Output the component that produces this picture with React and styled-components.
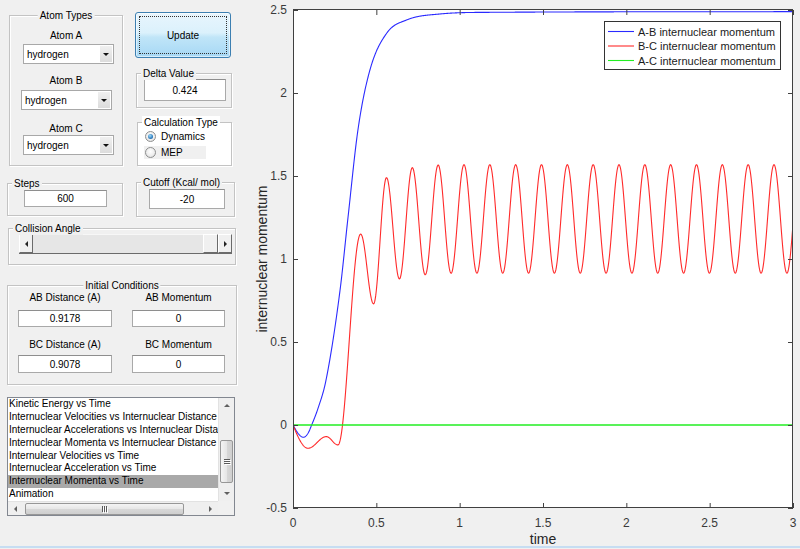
import React from 'react';
import styled, { createGlobalStyle } from 'styled-components';

const GlobalStyle = createGlobalStyle`
  html, body {
    margin: 0;
    padding: 0;
    background: #f0f0f0;
  }
  body {
    font-family: "Liberation Sans", Arial, sans-serif;
    font-size: 10px;
    color: #000;
  }
  #root {
    width: 800px;
    height: 549px;
    overflow: hidden;
  }
`;

const Window = styled.div`
  width: 800px;
  height: 549px;
  display: flex;
  flex-direction: column;
  background: #f0f0f0;
`;

const Main = styled.div`
  display: flex;
  height: 546px;
`;

const BottomEdge = styled.div`
  height: 2px;
  background: #c6ddf2;
`;

const Controls = styled.div`
  width: 240px;
  flex: none;
  display: flex;
  flex-direction: column;
`;

const Row = styled.div`
  display: flex;
  align-items: flex-start;
`;

const Column = styled.div`
  display: flex;
  flex-direction: column;
  align-items: flex-start;
  width: ${p => p.$w}px;
  margin: ${p => p.$mt || 0}px 0 0 ${p => p.$ml || 0}px;
`;

const Panel = styled.div`
  position: relative;
  box-sizing: border-box;
  flex: none;
  width: ${p => p.$w}px;
  height: ${p => p.$h}px;
  margin: ${p => p.$mt || 0}px 0 0 ${p => p.$ml || 0}px;
  border: 1px solid #c3c3c3;
  box-shadow: inset 1px 1px 0 #fff, 1px 1px 0 #fff;
  background: ${p => p.$bg || '#f0f0f0'};
  display: flex;
  flex-direction: column;
  align-items: flex-start;
`;

const PanelTitle = styled.span`
  position: absolute;
  top: -7px;
  left: ${p => (p.$center ? '50%' : '4px')};
  transform: ${p => (p.$center ? 'translateX(-50%)' : 'none')};
  padding: 0 2px;
  line-height: 13px;
  white-space: nowrap;
  background: inherit;
`;

const FieldLabel = styled.div`
  align-self: stretch;
  text-align: center;
  line-height: 12px;
  white-space: nowrap;
  margin-top: ${p => p.$mt || 0}px;
`;

const EditBox = styled.div`
  box-sizing: border-box;
  flex: none;
  width: ${p => p.$w}px;
  height: ${p => p.$h}px;
  margin: ${p => p.$mt || 0}px 0 0 ${p => p.$ml || 0}px;
  background: #fff;
  border: 1px solid #a9a9a9;
  border-top-color: #8e8e8e;
  display: flex;
  align-items: center;
  justify-content: center;
`;

const arrowCss = (dir, s, c) => {
  if (dir === 'down') return `border-width: ${s}px ${s}px 0; border-top-color: ${c};`;
  if (dir === 'up') return `border-width: 0 ${s}px ${s}px; border-bottom-color: ${c};`;
  if (dir === 'left') return `border-width: ${s}px ${s}px ${s}px 0; border-right-color: ${c};`;
  return `border-width: ${s}px 0 ${s}px ${s}px; border-left-color: ${c};`;
};

const Arrow = styled.span`
  width: 0;
  height: 0;
  border-style: solid;
  border-color: transparent;
  ${p => arrowCss(p.$dir, p.$s || 3, p.$c || '#000')}
`;

const Dropdown = styled.div`
  box-sizing: border-box;
  flex: none;
  width: 91px;
  height: 20px;
  margin: ${p => p.$mt}px 0 0 ${p => p.$ml}px;
  padding: 0 1px 0 3px;
  background: #fff;
  border: 1px solid #a8a8a8;
  display: flex;
  align-items: center;
`;

const DropValue = styled.span`
  flex: 1;
`;

const DropButton = styled.span`
  width: 12px;
  height: 16px;
  background: linear-gradient(#f0f0f0, #dcdcdc);
  display: flex;
  align-items: center;
  justify-content: center;
`;

const UpdateButton = styled.button`
  box-sizing: border-box;
  flex: none;
  width: 96px;
  height: 46px;
  margin: 0;
  padding: 3px;
  border: 1px solid #3c7fb1;
  border-radius: 3px;
  background: linear-gradient(#e8f5fd 0%, #dbf1fc 45%, #c0e5f8 55%, #a6d8f5 100%);
  box-shadow: inset 0 0 0 1px rgba(255, 255, 255, 0.55);
  font: inherit;
  color: #000;
`;

const FocusRing = styled.span`
  box-sizing: border-box;
  display: flex;
  height: 100%;
  align-items: center;
  justify-content: center;
  border: 1px dotted #333;
`;

const RadioRow = styled.div`
  box-sizing: border-box;
  display: flex;
  align-items: center;
  gap: 5px;
  width: 62px;
  height: 13px;
  margin: ${p => p.$mt}px 0 0 6px;
  padding-left: 1px;
  background: ${p => p.$bg || 'transparent'};
`;

const RadioCircle = styled.span`
  box-sizing: border-box;
  flex: none;
  width: 11px;
  height: 11px;
  border-radius: 50%;
  border: 1px solid #8e8f8f;
  background: radial-gradient(circle at 50% 40%, #fff 0%, #ececec 60%, #d4d4d4 100%);
  display: flex;
  align-items: center;
  justify-content: center;
`;

const RadioDot = styled.span`
  width: 5px;
  height: 5px;
  border-radius: 50%;
  background: radial-gradient(circle at 40% 35%, #a2dbf9, #1f6fb4 70%, #124e86);
`;

const Slider = styled.div`
  box-sizing: border-box;
  display: flex;
  width: 213px;
  height: 20px;
  margin: 5px 0 0 10px;
  background: #e6e6e6;
  border-bottom: 1px solid #6b6b6b;
`;

const SliderButton = styled.span`
  box-sizing: border-box;
  flex: none;
  width: ${p => p.$w || 14}px;
  background: #f0f0f0;
  border-style: solid;
  border-width: 1px;
  border-color: #fff #6b6b6b #6b6b6b #fff;
  display: flex;
  align-items: center;
  justify-content: center;
`;

const SliderTrack = styled.span`
  flex: 1;
  border-top: 1px solid #f7f7f7;
`;

const CondGrid = styled.div`
  display: grid;
  grid-template-columns: 94px 93px;
  column-gap: 20px;
  row-gap: 12px;
  padding: 6px 0 0 10px;
`;

const CondCell = styled.div`
  display: flex;
  flex-direction: column;
  align-items: center;
`;

const ListBox = styled.div`
  box-sizing: border-box;
  width: 228px;
  height: 119px;
  margin: 12px 0 0 7px;
  border: 1px solid #828790;
  background: #fff;
  display: grid;
  grid-template-columns: 1fr 16px;
  grid-template-rows: 1fr 14px;
`;

const ListItems = styled.div`
  overflow: hidden;
`;

const ListItem = styled.div`
  height: 12.9px;
  line-height: 12.9px;
  padding-left: 1px;
  white-space: nowrap;
  overflow: hidden;
  background: ${p => (p.$selected ? '#a9a9a9' : 'transparent')};
`;

const VScroll = styled.div`
  display: flex;
  flex-direction: column;
  align-items: center;
  background: #efefef;
  border-left: 1px solid #e2e2e2;
`;

const HScroll = styled.div`
  display: flex;
  align-items: center;
  background: #efefef;
  border-top: 1px solid #e2e2e2;
`;

const ScrollButton = styled.span`
  flex: none;
  width: 15px;
  height: ${p => (p.$vertical ? '15px' : '13px')};
  display: flex;
  align-items: center;
  justify-content: center;
`;

const TrackGap = styled.span`
  flex: ${p => (p.$size ? 'none' : '1')};
  width: ${p => (p.$size ? `${p.$size}px` : 'auto')};
  height: ${p => (p.$size && p.$vertical ? `${p.$size}px` : 'auto')};
`;

const Thumb = styled.span`
  box-sizing: border-box;
  flex: none;
  width: ${p => p.$w}px;
  height: ${p => p.$h}px;
  border: 1px solid #979797;
  border-radius: 2px;
  background: ${p => (p.$vertical
    ? 'linear-gradient(to right, #f4f4f4, #e6e6e6 50%, #d8d8d8 50%, #cfcfcf)'
    : 'linear-gradient(#f4f4f4, #e6e6e6 50%, #d8d8d8 50%, #cfcfcf)')};
  display: flex;
  flex-direction: ${p => (p.$vertical ? 'column' : 'row')};
  align-items: center;
  justify-content: center;
  gap: 1px;
`;

const Grip = styled.span`
  width: ${p => (p.$vertical ? '6px' : '1px')};
  height: ${p => (p.$vertical ? '1px' : '6px')};
  background: #5a5a5a;
  box-shadow: 1px 1px 0 #fff;
`;

const Corner = styled.div`
  background: #f0f0f0;
`;

const ChartArea = styled.div`
  flex: 1;
  display: flex;
`;

const PlotText = styled.text`
  font-family: "Liberation Sans", Arial, sans-serif;
  font-size: ${p => p.$size || 12}px;
  fill: ${p => p.$color || '#3a3a3a'};
`;

// ---- chart data ----
const PLOT = { left: 53, right: 553, top: 10, bottom: 508 };
const px = t => PLOT.left + (t / 3) * 500;
const py = v => 425 - v * 166;

function monotone(points) {
  const n = points.length;
  const xs = points.map(p => p[0]);
  const ys = points.map(p => p[1]);
  const d = [];
  for (let i = 0; i < n - 1; i++) d.push((ys[i + 1] - ys[i]) / (xs[i + 1] - xs[i]));
  const m = new Array(n);
  m[0] = d[0];
  m[n - 1] = d[n - 2];
  for (let i = 1; i < n - 1; i++) {
    m[i] = d[i - 1] * d[i] <= 0 ? 0 : (d[i - 1] + d[i]) / 2;
  }
  for (let i = 0; i < n - 1; i++) {
    if (d[i] === 0) { m[i] = 0; m[i + 1] = 0; continue; }
    const a = m[i] / d[i];
    const b = m[i + 1] / d[i];
    const s = a * a + b * b;
    if (s > 9) {
      const k = 3 / Math.sqrt(s);
      m[i] = k * a * d[i];
      m[i + 1] = k * b * d[i];
    }
  }
  return t => {
    let i = 0;
    while (i < n - 2 && t > xs[i + 1]) i++;
    const h = xs[i + 1] - xs[i];
    const s = Math.min(1, Math.max(0, (t - xs[i]) / h));
    const s2 = s * s;
    const s3 = s2 * s;
    return (2 * s3 - 3 * s2 + 1) * ys[i] + (s3 - 2 * s2 + s) * h * m[i]
      + (-2 * s3 + 3 * s2) * ys[i + 1] + (s3 - s2) * h * m[i + 1];
  };
}

const blueAt = monotone([
  [0, 0], [0.03, -0.05], [0.062, -0.074], [0.09, -0.05], [0.112, 0], [0.15, 0.1],
  [0.198, 0.27], [0.282, 0.81], [0.33, 1.25], [0.39, 1.78], [0.462, 2.14],
  [0.562, 2.36], [0.682, 2.44], [0.882, 2.476], [1.18, 2.486], [3, 2.49]
]);

const redExtrema = (() => {
  const list = [[0.09, -0.14], [0.2, -0.07], [0.27, -0.12]];
  const peaks = [1.15, 1.49, 1.55, 1.566];
  const troughs = [0.73, 0.88, 0.905, 0.914];
  for (let k = 0; k < 19; k++) {
    list.push([0.406 + k * 0.155, peaks[k] ?? 1.568]);
    list.push([0.4835 + k * 0.155, troughs[k] ?? 0.915]);
  }
  return list;
})();

const redAt = t => {
  if (t <= 0.09) return -0.14 * Math.sin((Math.PI / 2) * (t / 0.09));
  let i = 0;
  while (i < redExtrema.length - 2 && t > redExtrema[i + 1][0]) i++;
  const [t0, v0] = redExtrema[i];
  const [t1, v1] = redExtrema[i + 1];
  const s = (t - t0) / (t1 - t0);
  return v0 + (v1 - v0) * (1 - Math.cos(Math.PI * s)) / 2;
};

const buildPath = fn => {
  const parts = [];
  for (let i = 0; i <= 1500; i++) {
    const t = (i / 1500) * 3;
    parts.push(`${i === 0 ? 'M' : 'L'}${px(t).toFixed(2)} ${py(fn(t)).toFixed(2)}`);
  }
  return parts.join(' ');
};

const BLUE_PATH = buildPath(blueAt);
const RED_PATH = buildPath(redAt);

const Y_TICKS = [-0.5, 0, 0.5, 1, 1.5, 2, 2.5];
const X_TICKS = [0, 0.5, 1, 1.5, 2, 2.5, 3];

const LEGEND = [
  { label: 'A-B internuclear momentum', color: '#2a2aff' },
  { label: 'B-C internuclear momentum', color: '#ff2a2a' },
  { label: 'A-C internuclear momentum', color: '#22ee22' }
];

const PLOT_OPTIONS = [
  'Kinetic Energy vs Time',
  'Internuclear Velocities vs Internuclear Distance',
  'Internuclear Accelerations vs Internuclear Distance',
  'Internuclear Momenta vs Internuclear Distance',
  'Internulear Velocities vs Time',
  'Internuclear Acceleration vs Time',
  'Internuclear Momenta vs Time',
  'Animation'
];

const AtomSelect = ({ mt, ml }) => (
  <Dropdown $mt={mt} $ml={ml}>
    <DropValue>hydrogen</DropValue>
    <DropButton>
      <Arrow $dir="down" $s={3} $c="#111" />
    </DropButton>
  </Dropdown>
);

const MomentumChart = () => (
  <svg width="560" height="546" viewBox="0 0 560 546" overflow="visible">
    <defs>
      <clipPath id="plot-clip">
        <rect x={PLOT.left} y={PLOT.top} width={500} height={498} />
      </clipPath>
    </defs>
    <rect x={PLOT.left} y={PLOT.top} width={500} height={498} fill="#fff" />
    <g clipPath="url(#plot-clip)" fill="none" strokeWidth="1.1">
      <path d={BLUE_PATH} stroke="#2a2aff" />
      <path d={RED_PATH} stroke="#ff2a2a" />
      <line x1={px(0)} y1={py(0)} x2={px(3)} y2={py(0)} stroke="#22ee22" strokeWidth="1.5" />
    </g>
    <rect x={PLOT.left + 0.5} y={PLOT.top - 0.5} width={499} height={498} fill="none" stroke="#404040" />
    <g stroke="#404040">
      {Y_TICKS.map(v => (
        <g key={`y${v}`}>
          <line x1={PLOT.left} x2={PLOT.left + 5} y1={py(v) + 0.5} y2={py(v) + 0.5} />
          <line x1={PLOT.right - 5} x2={PLOT.right} y1={py(v) + 0.5} y2={py(v) + 0.5} />
        </g>
      ))}
      {X_TICKS.map(t => (
        <g key={`x${t}`}>
          <line x1={px(t) + 0.5} x2={px(t) + 0.5} y1={PLOT.bottom} y2={PLOT.bottom - 5} />
          <line x1={px(t) + 0.5} x2={px(t) + 0.5} y1={PLOT.top} y2={PLOT.top + 5} />
        </g>
      ))}
    </g>
    {Y_TICKS.map(v => (
      <PlotText key={`yl${v}`} x={47} y={py(v)} textAnchor="end" dominantBaseline="central">
        {String(v)}
      </PlotText>
    ))}
    {X_TICKS.map(t => (
      <PlotText key={`xl${t}`} x={px(t)} y={523} textAnchor="middle" dominantBaseline="central">
        {String(t)}
      </PlotText>
    ))}
    <PlotText x={px(1.5)} y={539} $size={14} $color="#262626" textAnchor="middle" dominantBaseline="central">
      time
    </PlotText>
    <PlotText
      x={22}
      y={259}
      $size={14}
      $color="#262626"
      textAnchor="middle"
      dominantBaseline="central"
      transform="rotate(-90 22 259)"
    >
      internuclear momentum
    </PlotText>
    <g>
      <rect x={364.5} y={21.5} width={176} height={48} fill="#fff" stroke="#333" />
      {LEGEND.map((item, i) => (
        <g key={item.label}>
          <line x1={368} x2={394} y1={31.5 + i * 14.5} y2={31.5 + i * 14.5} stroke={item.color} strokeWidth="1.1" />
          <PlotText x={398} y={31.5 + i * 14.5} $size={11} $color="#1a1a1a" dominantBaseline="central">
            {item.label}
          </PlotText>
        </g>
      ))}
    </g>
  </svg>
);

const App = () => (
  <Window>
    <GlobalStyle />
    <Main>
      <Controls>
        <Row>
          <Panel $w={114} $h={151} $mt={15} $ml={9}>
            <PanelTitle $center>Atom Types</PanelTitle>
            <FieldLabel $mt={14}>Atom A</FieldLabel>
            <AtomSelect mt={2} ml={13} />
            <FieldLabel $mt={11}>Atom B</FieldLabel>
            <AtomSelect mt={3} ml={11} />
            <FieldLabel $mt={13}>Atom C</FieldLabel>
            <AtomSelect mt={0} ml={13} />
          </Panel>
          <Column $w={100} $mt={12} $ml={12}>
            <UpdateButton>
              <FocusRing>Update</FocusRing>
            </UpdateButton>
            <Panel $w={96} $h={35} $mt={15} $ml={1}>
              <PanelTitle>Delta Value</PanelTitle>
              <EditBox $w={82} $h={22} $mt={5} $ml={7}>0.424</EditBox>
            </Panel>
            <Panel $w={95} $h={44} $mt={14} $ml={2} $bg="#ffffff">
              <PanelTitle>Calculation Type</PanelTitle>
              <RadioRow $mt={7}>
                <RadioCircle>
                  <RadioDot />
                </RadioCircle>
                Dynamics
              </RadioRow>
              <RadioRow $mt={3} $bg="#f0f0f0">
                <RadioCircle />
                MEP
              </RadioRow>
            </Panel>
          </Column>
        </Row>
        <Row>
          <Panel $w={116} $h={33} $mt={17} $ml={7}>
            <PanelTitle>Steps</PanelTitle>
            <EditBox $w={83} $h={17} $mt={6} $ml={16}>600</EditBox>
          </Panel>
          <Panel $w={99} $h={35} $mt={16} $ml={13}>
            <PanelTitle>Cutoff (Kcal/ mol)</PanelTitle>
            <EditBox $w={76} $h={20} $mt={6} $ml={12}>-20</EditBox>
          </Panel>
        </Row>
        <Panel $w={228} $h={37} $mt={11} $ml={8}>
          <PanelTitle>Collision Angle</PanelTitle>
          <Slider>
            <SliderButton>
              <Arrow $dir="left" $s={3} $c="#222" />
            </SliderButton>
            <SliderTrack />
            <SliderButton $w={15} />
            <SliderButton>
              <Arrow $dir="right" $s={3} $c="#222" />
            </SliderButton>
          </Slider>
        </Panel>
        <Panel $w={230} $h={100} $mt={20} $ml={7}>
          <PanelTitle $center>Initial Conditions</PanelTitle>
          <CondGrid>
            <CondCell>
              <FieldLabel>AB Distance (A)</FieldLabel>
              <EditBox $w={94} $h={17} $mt={6}>0.9178</EditBox>
            </CondCell>
            <CondCell>
              <FieldLabel>AB Momentum</FieldLabel>
              <EditBox $w={93} $h={17} $mt={6}>0</EditBox>
            </CondCell>
            <CondCell>
              <FieldLabel>BC Distance (A)</FieldLabel>
              <EditBox $w={94} $h={18} $mt={4}>0.9078</EditBox>
            </CondCell>
            <CondCell>
              <FieldLabel>BC Momentum</FieldLabel>
              <EditBox $w={93} $h={18} $mt={4}>0</EditBox>
            </CondCell>
          </CondGrid>
        </Panel>
        <ListBox>
          <ListItems>
            {PLOT_OPTIONS.map(option => (
              <ListItem key={option} $selected={option === 'Internuclear Momenta vs Time'}>
                {option}
              </ListItem>
            ))}
          </ListItems>
          <VScroll>
            <ScrollButton $vertical>
              <Arrow $dir="up" $s={3} $c="#606060" />
            </ScrollButton>
            <TrackGap $size={27} $vertical />
            <Thumb $vertical $w={13} $h={43}>
              <Grip $vertical />
              <Grip $vertical />
              <Grip $vertical />
            </Thumb>
            <TrackGap />
            <ScrollButton $vertical>
              <Arrow $dir="down" $s={3} $c="#606060" />
            </ScrollButton>
          </VScroll>
          <HScroll>
            <ScrollButton>
              <Arrow $dir="left" $s={3} $c="#606060" />
            </ScrollButton>
            <TrackGap $size={2} />
            <Thumb $w={159} $h={12}>
              <Grip />
              <Grip />
              <Grip />
            </Thumb>
            <TrackGap />
            <ScrollButton>
              <Arrow $dir="right" $s={3} $c="#606060" />
            </ScrollButton>
          </HScroll>
          <Corner />
        </ListBox>
      </Controls>
      <ChartArea>
        <MomentumChart />
      </ChartArea>
    </Main>
    <BottomEdge />
  </Window>
);

export default App;
